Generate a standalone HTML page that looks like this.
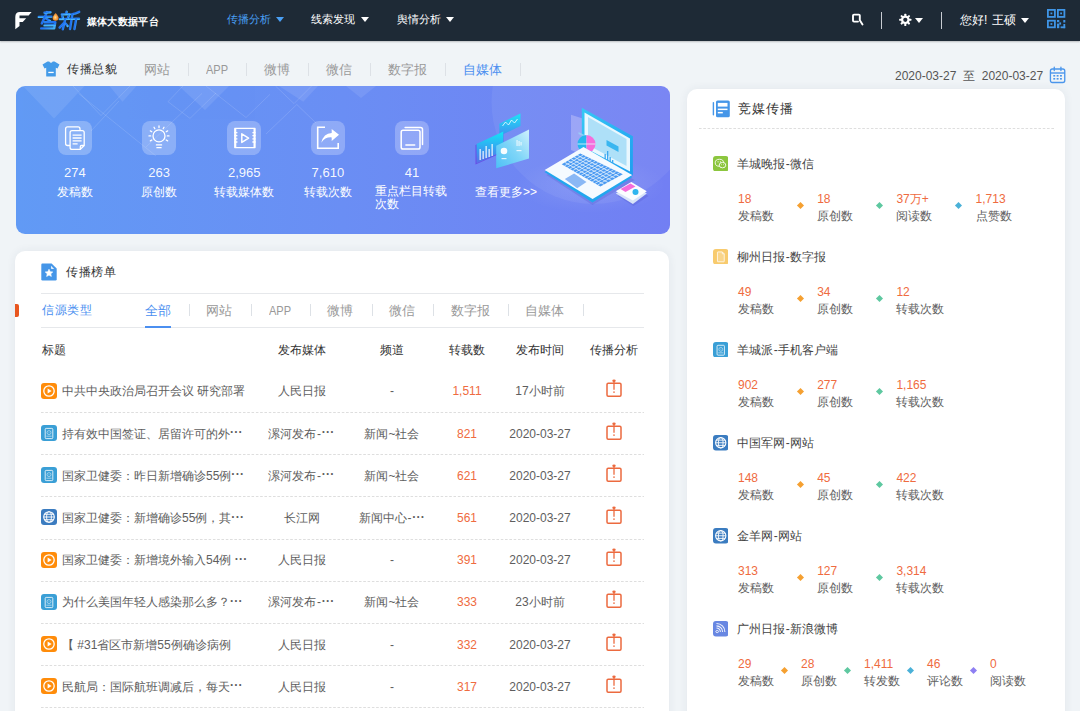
<!DOCTYPE html>
<html><head><meta charset="utf-8">
<style>
*{margin:0;padding:0;box-sizing:border-box}
html,body{width:1080px;height:711px;overflow:hidden;background:#f0f4f7;font-family:"Liberation Sans",sans-serif;}
.a{position:absolute;white-space:nowrap}
#hdr{position:absolute;left:0;top:0;width:1080px;height:41px;background:#1e2a36;box-shadow:0 1px 1.5px rgba(0,0,0,0.22)}
.nav{font-size:11.3px;color:#fff;line-height:14px}
.tri{position:absolute;width:0;height:0;border-left:4px solid transparent;border-right:4px solid transparent;border-top:5px solid #fff}
.tab1{font-size:13px;color:#999;line-height:15px}
.vd{position:absolute;width:1px;background:#dde1e6}
.card{position:absolute;background:#fff;border-radius:10px;box-shadow:0 0 10px rgba(40,60,90,0.07)}
.td{font-size:12px;color:#5e5e5e;line-height:14px}
.th{font-size:12px;color:#333;line-height:14px}
.c{text-align:center}
.hy{margin:0 0.7px}
.el{letter-spacing:0.3px;position:relative;top:-1.5px;font-weight:bold}
.num{color:#ef6b40}
.dash{position:absolute;height:1px;background-image:linear-gradient(90deg,#dedede 0 2.9px,transparent 2.9px 4.3px);background-size:4.3px 1px}
.rn{font-size:12px;color:#444;line-height:14px}
.rv{font-size:12px;color:#ef6b40;line-height:14px}
.rl{font-size:12px;color:#5e5e5e;line-height:14px}
.dia{position:absolute;width:5px;height:5px;transform:rotate(45deg)}
.bi{position:absolute;width:34px;height:34px;border-radius:8px;background:rgba(255,255,255,0.25)}
.bn{font-size:13px;color:rgba(255,255,255,0.95);text-align:center;line-height:15px}
.bl{font-size:12px;color:#fff;text-align:center;line-height:14px}
</style></head><body>
<div id="hdr">
  <svg class="a" style="left:0;top:0" width="84" height="40" viewBox="0 0 84 40">
<path d="M15.3 29.2 L15.3 17 Q15.3 12 19.8 12 L31.6 12 L28.6 15.6 L19.5 15.6 L19.5 18.2 L26.2 18.2 L22.7 21.9 L19.5 21.9 L19.5 26 Z" fill="#fff"/>
<defs><linearGradient id="lg" x1="0" y1="0" x2="1" y2="1"><stop offset="0" stop-color="#2a86f5"/><stop offset="0.5" stop-color="#1f6ff0"/><stop offset="1" stop-color="#48b8f8"/></linearGradient>
<radialGradient id="og" cx="0.45" cy="0.55" r="0.6"><stop offset="0" stop-color="#ffe3a0"/><stop offset="0.5" stop-color="#f6a040"/><stop offset="1" stop-color="#e07020"/></radialGradient></defs>
<g fill="none" stroke="url(#lg)" stroke-width="2.4" stroke-linecap="round" stroke-linejoin="round">
<path d="M38.8 16.9 L51.5 16.6"/><path d="M47 12 L41.8 23.5"/><path d="M44.5 12.6 L50.5 12.2"/><path d="M46 18.5 L50 21"/>
<path d="M44.6 22.3 L55.3 22.2 L54.2 28.3 L41.2 28.4"/><path d="M44.5 25.4 L54.5 25.3"/>
<path d="M66.6 11.6 L66.4 12.8"/><path d="M61.8 14.4 L69.8 14.2"/><path d="M59.8 19.1 L69.8 18.9"/><path d="M65.2 19.2 L62.8 29.3"/><path d="M62.3 16.2 L62.8 17.8"/><path d="M68.8 15.8 L68 17.6"/><path d="M63.6 23.2 L59.6 27.6"/><path d="M65.6 23.4 L67.6 26"/>
<path d="M79.2 11.8 Q75.5 13.6 72.4 14.1"/><path d="M72.4 14.1 L70 29"/><path d="M71.6 18.9 L79 18.7"/><path d="M76.2 19 L74.4 29"/>
</g>
<path d="M55.6 13 Q58.6 16.5 58.6 17.8 A3 3 0 0 1 52.6 17.8 Q52.6 16.5 55.6 13 Z" fill="url(#og)"/>
</svg>
  <div class="a" style="left:86.5px;top:15px;font-size:10px;letter-spacing:0.35px;font-weight:bold;color:#fff;line-height:13px">媒体大数据平台</div>
  <div class="a nav" style="left:227px;top:12px;color:#4aa0f5">传播分析</div>
  <div class="tri" style="left:276px;top:17px;border-top-color:#4aa0f5"></div>
  <div class="a nav" style="left:311px;top:12px">线索发现</div>
  <div class="tri" style="left:361px;top:17px"></div>
  <div class="a nav" style="left:397px;top:12px">舆情分析</div>
  <div class="tri" style="left:446px;top:17px"></div>
  <svg class="a" style="left:850px;top:12px" width="16" height="16" viewBox="0 0 16 16">
    <path d="M8 9.6 L4 9.6 Q3 9.6 3 8.6 L3 3.6 Q3 2.6 4 2.6 L8.8 2.6 Q9.8 2.6 9.8 3.6 L9.8 8.2 L12.5 12.5" fill="none" stroke="#fff" stroke-width="1.9" stroke-linecap="round" stroke-linejoin="round"/>
  </svg>
  <div class="vd" style="left:881px;top:12px;height:17px;background:#c8ccd2"></div>
  <svg class="a" style="left:898px;top:13px" width="15" height="14" viewBox="0 0 15 14">
    <g fill="#fff" transform="translate(7.3,6.8)">
      <circle r="4.3"/>
      <rect x="-1" y="-6.1" width="2" height="12.2" rx="0.5"/>
      <rect x="-1" y="-6.1" width="2" height="12.2" rx="0.5" transform="rotate(45)"/>
      <rect x="-1" y="-6.1" width="2" height="12.2" rx="0.5" transform="rotate(90)"/>
      <rect x="-1" y="-6.1" width="2" height="12.2" rx="0.5" transform="rotate(135)"/>
      <circle r="2.1" fill="#1f2a36"/>
    </g>
  </svg>
  <div class="tri" style="left:915px;top:18px"></div>
  <div class="vd" style="left:941px;top:12px;height:17px;background:#c8ccd2"></div>
  <div class="a nav" style="left:960px;top:13px;font-size:12px">您好!<span style="margin-left:5px"></span>王硕</div>
  <div class="tri" style="left:1021px;top:18px"></div>
  <svg class="a" style="left:1047px;top:9px" width="20" height="20" viewBox="0 0 20 20">
    <g fill="none" stroke="#3f95e6" stroke-width="1.8">
      <rect x="0.9" y="0.9" width="7" height="7"/>
      <rect x="10.9" y="0.9" width="6.5" height="7"/>
      <rect x="0.9" y="11.7" width="7" height="6.6"/>
    </g>
    <g fill="#3f95e6">
      <rect x="3.5" y="3.5" width="1.8" height="1.8"/><rect x="13.2" y="3.5" width="1.8" height="1.8"/><rect x="3.5" y="14.1" width="1.8" height="1.8"/>
      <rect x="10" y="11" width="2.3" height="2.2"/><rect x="10" y="14.6" width="2.3" height="4.6"/><rect x="16.3" y="11" width="2" height="2.5"/><rect x="12.3" y="13.4" width="1.8" height="2.2"/><rect x="16.4" y="15" width="1.8" height="4.2"/><rect x="13.6" y="17.4" width="4.6" height="1.8"/>
    </g>
  </svg>
</div>
<!-- tab row -->
<svg class="a" style="left:42px;top:61px" width="18" height="16" viewBox="0 0 18 16">
  <path d="M5.5 0.5 L7.2 0.5 Q9 3 10.8 0.5 L12.5 0.5 L17.5 3.5 L15.5 7.5 L13.8 6.8 L13.8 15 Q13.8 15.5 13.3 15.5 L4.7 15.5 Q4.2 15.5 4.2 15 L4.2 6.8 L2.5 7.5 L0.5 3.5 Z" fill="#449be8"/>
  <rect x="6.3" y="10.8" width="5.4" height="1.3" fill="#fff"/>
</svg>
<div class="a" style="left:67px;top:62px;font-size:12px;letter-spacing:0.5px;color:#333;line-height:15px">传播总貌</div>
<div class="a tab1" style="left:144px;top:62px">网站</div>
<div class="vd" style="left:187.5px;top:63px;height:13px"></div>
<div class="a tab1" style="left:205.5px;top:62px"><span style="display:inline-block;font-size:13px;transform:scaleX(0.85);transform-origin:0 0">APP</span></div>
<div class="vd" style="left:246px;top:63px;height:13px"></div>
<div class="a tab1" style="left:264px;top:62px">微博</div>
<div class="vd" style="left:308px;top:63px;height:13px"></div>
<div class="a tab1" style="left:325.5px;top:62px">微信</div>
<div class="vd" style="left:370px;top:63px;height:13px"></div>
<div class="a tab1" style="left:387.5px;top:62px">数字报</div>
<div class="vd" style="left:445px;top:63px;height:13px"></div>
<div class="a tab1" style="left:462.5px;top:62px;color:#4b8ff0">自媒体</div>
<div class="vd" style="left:520px;top:63px;height:13px"></div>
<div class="a" style="left:895px;top:69px;font-size:12px;color:#555;line-height:14px">2020-03-27 &nbsp;至&nbsp; 2020-03-27</div>
<svg class="a" style="left:1049px;top:66px" width="17.2" height="18" viewBox="0 0 18 18" preserveAspectRatio="none">
  <rect x="1.5" y="3" width="15" height="13.5" rx="2" fill="none" stroke="#4b96ec" stroke-width="1.4"/>
  <path d="M1.5 7 H16.5" stroke="#4b96ec" stroke-width="1.4"/>
  <path d="M5.5 1.2 V4.5 M12.5 1.2 V4.5" stroke="#4b96ec" stroke-width="1.4" stroke-linecap="round"/>
  <g fill="#4b96ec"><rect x="4.5" y="9" width="2" height="1.6"/><rect x="8" y="9" width="2" height="1.6"/><rect x="11.5" y="9" width="2" height="1.6"/><rect x="4.5" y="12" width="2" height="1.6"/><rect x="8" y="12" width="2" height="1.6"/><rect x="11.5" y="12" width="2" height="1.6"/></g>
</svg>

<!-- banner -->
<div class="a" id="banner" style="left:15.5px;top:86px;width:654px;height:148px;border-radius:9px;overflow:hidden;background:linear-gradient(90deg,#619af5 0%,#6a8ef4 50%,#727ff3 100%)">
  <svg class="a" style="left:0;top:0" width="654" height="148" viewBox="0 0 654 148">
    <g fill="#fff" opacity="0.09">
      <path d="M7 0 L68.5 0 L38 32.4 Z"/>
      <path d="M93.5 0 L120.4 0 L106.5 15.7 Z"/>
      <path d="M163 0 L213 0 L189 24 Z"/>
      <path d="M263 0 L302 0 L287.3 15.7 Z"/>
      <path d="M330 0 L360 0 L345 12 Z"/>
    </g>
    <g fill="none" stroke="#fff" stroke-opacity="0.13" stroke-width="1">
      <path d="M57 0 L85 29.6 L114 0"/>
      <path d="M62.5 7.4 L140 70"/>
      <path d="M103 15 L75 45"/>
      <path d="M152 15.7 L167 0 M152 15.7 L174 32.4 L200 7"/>
      <path d="M186 7.4 L130 61"/>
      <path d="M254 8.3 L230 31.5 L190 0"/>
      <path d="M280.8 18.5 L250 48 M280.8 18.5 L300 37"/>
      <path d="M259.5 0 L278 17.6 L295.6 0"/>
    </g>
    <circle cx="577.5" cy="16" r="102" fill="#fff" opacity="0.06"/>
  </svg>
  <div class="bi" style="left:42.3px;top:34.5px"><svg width="34" height="34" viewBox="0 0 34 34"><g fill="none" stroke="#fff" stroke-width="1.3" stroke-linejoin="round"><path d="M12.1 24.5 H9.6 Q7.6 24.5 7.6 22.5 V7.9 Q7.6 5.9 9.6 5.9 H20 Q22 5.9 22 7.9 V9.6"/><path d="M14.1 9.6 H24.2 Q26.2 9.6 26.2 11.6 V24.5 L22.3 28.4 H14.1 Q12.1 28.4 12.1 26.4 V11.6 Q12.1 9.6 14.1 9.6 Z"/><path d="M26.2 24.5 H23.5 Q22.3 24.5 22.3 25.7 V28.4"/><path d="M14.6 14.1 H23.6 M14.6 17 H23.6 M14.6 19.8 H23.6 M14.6 22.8 H19.6"/></g></svg></div>
<div class="a bn" style="left:9.3px;width:100px;top:78.5px">274</div>
<div class="a bl" style="left:9.3px;width:100px;top:99.3px">发稿数</div>
<div class="bi" style="left:126.6px;top:34.5px"><svg width="34" height="34" viewBox="0 0 34 34"><g fill="none" stroke="#fff" stroke-width="1.3" stroke-linecap="round"><circle cx="17" cy="14.9" r="6"/><g transform="translate(17 14.9)"><path d="M0 -8.3 V-10" transform="rotate(0)"/><path d="M0 -8.3 V-10" transform="rotate(-30)"/><path d="M0 -8.3 V-10" transform="rotate(30)"/><path d="M0 -8.3 V-10" transform="rotate(-60)"/><path d="M0 -8.3 V-10" transform="rotate(60)"/><path d="M0 -8.3 V-10" transform="rotate(-90)"/><path d="M0 -8.3 V-10" transform="rotate(90)"/><path d="M0 -8.3 V-10" transform="rotate(-120)"/><path d="M0 -8.3 V-10" transform="rotate(120)"/></g><path d="M14.4 23.9 H19.6 M14.9 26.7 H19.1"/></g></svg></div>
<div class="a bn" style="left:93.6px;width:100px;top:78.5px">263</div>
<div class="a bl" style="left:93.6px;width:100px;top:99.3px">原创数</div>
<div class="bi" style="left:211.7px;top:34.5px"><svg width="34" height="34" viewBox="0 0 34 34"><g fill="none" stroke="#fff" stroke-width="1.3" stroke-linejoin="round"><rect x="7.8" y="7.4" width="20.2" height="19.2"/><path d="M8.5 7.4 V26.6 M27.3 7.4 V26.6" stroke-width="1.6"/><path d="M7.2 11.6 H10.4 M7.2 14.7 H10.4 M7.2 17.8 H10.4 M7.2 21 H10.4 M25.4 11.6 H28.6 M25.4 14.7 H28.6 M25.4 17.8 H28.6 M25.4 21 H28.6"/><path d="M14.8 12.8 L21.6 17.1 L14.8 21.4 Z" stroke-width="1.5"/></g></svg></div>
<div class="a bn" style="left:178.7px;width:100px;top:78.5px">2,965</div>
<div class="a bl" style="left:178.7px;width:100px;top:99.3px">转载媒体数</div>
<div class="bi" style="left:295.4px;top:34.5px"><svg width="34" height="34" viewBox="0 0 34 34"><g fill="none" stroke="#fff" stroke-width="1.6" stroke-linecap="square"><path d="M13.2 6.2 H6.7 V27.3 H27.2 V22.8"/></g><path d="M10.3 21.7 Q12.5 12.3 20.7 12 V7.9 L28 13.8 L20.7 20 V16.4 Q14 16 10.3 21.7 Z" fill="#fff"/></svg></div>
<div class="a bn" style="left:262.4px;width:100px;top:78.5px">7,610</div>
<div class="a bl" style="left:262.4px;width:100px;top:99.3px">转载次数</div>
<div class="bi" style="left:379.6px;top:34.5px"><svg width="34" height="34" viewBox="0 0 34 34"><g fill="none" stroke="#fff" stroke-width="1.5" stroke-linecap="round"><rect x="6.2" y="9.3" width="18.8" height="18.8" rx="1.8"/><path d="M10.1 6.5 H25.5 Q27.5 6.5 27.5 8.5 V23.6"/><path d="M10.9 24 H19.7"/></g></svg></div>
<div class="a bn" style="left:346.6px;width:100px;top:78.5px">41</div>
<div class="a bl" style="left:359.3px;top:99.3px;white-space:normal;width:80px;text-align:left;line-height:13px">重点栏目转载<br>次数</div>
<div class="a bl" style="left:459.5px;top:99.3px;text-align:left">查看更多&gt;&gt;</div>
<svg class="a" style="left:0;top:0" width="654" height="148" viewBox="15.5 86 654 148">
<defs>
<linearGradient id="gA" x1="0" y1="0" x2="0" y2="1"><stop offset="0" stop-color="#1de4f6"/><stop offset="1" stop-color="#3f8ef0"/></linearGradient>
<linearGradient id="gB" x1="0" y1="0" x2="0" y2="1"><stop offset="0" stop-color="#12e6f7"/><stop offset="0.6" stop-color="#3a9bf0"/><stop offset="1" stop-color="#5a6ce8"/></linearGradient>
<linearGradient id="gC" x1="1" y1="0" x2="0" y2="1"><stop offset="0" stop-color="#d4f6fd"/><stop offset="0.5" stop-color="#7fd9f8"/><stop offset="1" stop-color="#4cc3f6"/></linearGradient>
<linearGradient id="gS" x1="0" y1="0" x2="1" y2="1"><stop offset="0" stop-color="#36c8f5"/><stop offset="1" stop-color="#1e9ff0"/></linearGradient>
<radialGradient id="gSh" cx="0.5" cy="0.5" r="0.5"><stop offset="0" stop-color="#fff" stop-opacity="0.12"/><stop offset="1" stop-color="#fff" stop-opacity="0"/></radialGradient>
</defs>
<ellipse cx="590" cy="185" rx="75" ry="28" fill="url(#gSh)"/>
<!-- small illus -->
<path d="M498.8 123.8 L520 113.4 L520 126 L498.8 136 Z" fill="url(#gA)"/>
<path d="M502 126 L505 122 L508 125 L511 120 L514 123 L517 119" fill="none" stroke="#fff" stroke-width="0.9" opacity="0.85"/>
<path d="M475 145 L502.9 132.3 L502.9 152 L475 164.5 Z" fill="#6a4ae6"/>
<path d="M476 144 L502.9 131.5 L502.9 151 L476 163.5 Z" fill="url(#gB)"/>
<g fill="#fff" opacity="0.85"><rect x="479" y="149" width="1.3" height="11"/><rect x="482" y="151" width="1.3" height="8"/><rect x="485" y="146" width="1.3" height="12"/><rect x="488" y="149" width="1.3" height="8"/><rect x="491" y="144" width="1.3" height="12"/></g>
<path d="M495.7 145.8 L528.5 129.6 L528.5 158.4 L495.7 168.3 Z" fill="url(#gC)" opacity="0.95"/>
<circle cx="503.5" cy="151" r="3.3" fill="#fff" opacity="0.95"/>
<g fill="#fff" opacity="0.8"><rect x="516" y="140" width="1.1" height="6"/><rect x="518" y="141" width="1.1" height="5"/><rect x="520" y="142" width="1.1" height="3.5"/><rect x="501" y="158" width="5" height="1.2"/><rect x="516" y="150" width="5" height="1.2"/></g>
<!-- laptop -->
<path d="M570.5 114.7 L590 121 L590 158 L570.5 150 Z" fill="#c8c8fa" opacity="0.45"/>
<path d="M581.3 107.7 L632.4 136.3 L632.4 175.8 L581.3 150 Z" fill="url(#gS)"/>
<path d="M584 112.5 L629.5 138.5 L629.5 171.5 L584 147.5 Z" fill="#e9f7fe"/>
<path d="M587.5 117 L626 139 L626 166 L587.5 145 Z" fill="#aee0f8"/>
<path d="M606 140 L618 146.5 L618 152 L606 145.5 Z" fill="#39b6f0"/>
<g fill="#3aa7f0"><rect x="604" y="154" width="1.3" height="14"/><rect x="606.5" y="151" width="1.3" height="17"/><rect x="609" y="157" width="1.3" height="11"/><rect x="611.5" y="160" width="1.3" height="9"/></g>
<path d="M578 132 L594 140 L594 142 L578 134 Z" fill="#9bd3f6" opacity="0.8"/>
<path d="M586 135 A9 9 0 0 0 586 153 Z" fill="#25b7ef"/>
<path d="M586 135 A9 9 0 0 1 586 153 Z" fill="#f56ddc"/>
<path d="M577 144 L595 144" stroke="#e9f7fe" stroke-width="0.8"/>
<path d="M546 175 L585 152 L634 180 L592 205 Z" fill="#4a50c8" opacity="0.25"/><path d="M544 172 L583 149 L632 177 L592 202.5 Z" fill="#22a6ee"/>
<path d="M544.2 170 L583 147 L631.6 175 L592.1 199 Z" fill="#f5faff"/>
<path d="M561.2 164.2 L579.8 153.4 L622.3 174.2 L599.9 186.6 Z" fill="#4a9af2"/>
<g stroke="#f5faff" stroke-width="0.8" opacity="0.95"><path d="M564.3 162.4 L603.6 184.5 M567.4 160.6 L607.4 182.5 M570.5 158.8 L611.1 180.4 M573.6 157.0 L614.8 178.3 M576.7 155.2 L618.6 176.3"/><path d="M564.0 165.8 L582.8 154.9 M566.7 167.4 L585.9 156.4 M569.5 169.0 L588.9 157.9 M572.3 170.6 L591.9 159.3 M575.0 172.2 L595.0 160.8 M577.8 173.8 L598.0 162.3 M580.5 175.4 L601.0 163.8 M583.3 177.0 L604.1 165.3 M586.1 178.6 L607.1 166.8 M588.8 180.2 L610.2 168.3 M591.6 181.8 L613.2 169.7 M594.4 183.4 L616.2 171.2 M597.1 185.0 L619.3 172.7" stroke-width="0.7"/></g>
<path d="M564.3 178.9 L573.6 173.5 L586 182 L576.7 188.2 Z" fill="#8ab8f5"/>
<!-- device -->
<path d="M617 196 L632 187 L648 196 L633 206 Z" fill="#4a50c8" opacity="0.25"/><path d="M615.3 193.5 L630.8 184 L646.3 193.5 L632.4 204 Z" fill="#d8e4f8"/>
<path d="M615.3 191.3 L630.8 182 L646.3 191.3 L632.4 200.5 Z" fill="#fbfdff"/>
<path d="M620 189 L630 183.5 L635 186.5 L625 192 Z" fill="#f56ddc"/>
<circle cx="635" cy="192" r="3" fill="#2fb5ef"/>
</svg>
</div>

<!-- left card -->
<div class="card" style="left:15.3px;top:251px;width:654.2px;height:480px"></div>
<svg class="a" style="left:41px;top:263px" width="16" height="18" viewBox="0 0 16 18">
  <path d="M1.3 0.5 H10.6 L15.7 5.6 V16.2 Q15.7 17.4 14.5 17.4 H1.5 Q0.3 17.4 0.3 16.2 V1.7 Q0.3 0.5 1.3 0.5 Z" fill="#4596e8"/>
  <path d="M10 2.8 L13.2 6 H10.8 Q10 6 10 5.2 Z" fill="#fff" fill-opacity="0.85"/>
  <path d="M8.00 6.20 L9.12 8.66 L11.80 8.96 L9.81 10.79 L10.35 13.44 L8.00 12.10 L5.65 13.44 L6.19 10.79 L4.20 8.96 L6.88 8.66 Z" fill="#fff" stroke="#fff" stroke-width="0.6" stroke-linejoin="round"/>
</svg>
<div class="a" style="left:66px;top:264.5px;font-size:12px;letter-spacing:0.5px;color:#333;line-height:15px">传播榜单</div>
<div class="a" style="left:41px;top:293px;width:603px;height:1px;background:#e6e8eb"></div>
<div class="a" style="left:15.3px;top:303.5px;width:3.5px;height:13px;background:#e8561f;border-radius:0 2px 2px 0"></div>
<div class="a" style="left:42px;top:302.5px;font-size:12px;letter-spacing:0.5px;color:#4b8ff0;line-height:15px">信源类型</div>
<div class="a tab1" style="left:144.5px;top:302.5px;color:#4b8ff0">全部</div>
<div class="vd" style="left:188.5px;top:304px;height:12px"></div>
<div class="a tab1" style="left:205.5px;top:302.5px">网站</div>
<div class="vd" style="left:250.5px;top:304px;height:12px"></div>
<div class="a tab1" style="left:268.5px;top:302.5px"><span style="display:inline-block;font-size:13px;transform:scaleX(0.85);transform-origin:0 0">APP</span></div>
<div class="vd" style="left:309.5px;top:304px;height:12px"></div>
<div class="a tab1" style="left:327px;top:302.5px">微博</div>
<div class="vd" style="left:371.5px;top:304px;height:12px"></div>
<div class="a tab1" style="left:389px;top:302.5px">微信</div>
<div class="vd" style="left:433px;top:304px;height:12px"></div>
<div class="a tab1" style="left:451px;top:302.5px">数字报</div>
<div class="vd" style="left:508px;top:304px;height:12px"></div>
<div class="a tab1" style="left:525px;top:302.5px">自媒体</div>
<div class="vd" style="left:583px;top:304px;height:12px"></div>
<div class="a" style="left:41px;top:327px;width:603px;height:1px;background:#e6e8eb"></div>
<div class="a" style="left:144.5px;top:326px;width:26px;height:2px;background:#4b8ff0"></div>
<div class="a th" style="left:41.5px;top:342.5px">标题</div>
<div class="a th c" style="left:251px;width:101px;top:342.5px">发布媒体</div>
<div class="a th c" style="left:342px;width:100px;top:342.5px">频道</div>
<div class="a th c" style="left:427px;width:80px;top:342.5px">转载数</div>
<div class="a th c" style="left:490px;width:100px;top:342.5px">发布时间</div>
<div class="a th c" style="left:564px;width:100px;top:342.5px">传播分析</div>
<div class="a" style="left:41px;top:382.8px;width:16px;height:16px"><svg width="16" height="16" viewBox="0 0 16 16"><rect width="16" height="16" rx="3" fill="#ff8c0a"/><circle cx="8" cy="8" r="5.2" fill="none" stroke="#fff" stroke-width="1.3"/><path d="M6.6 5.6 L10.6 8 L6.6 10.4 Z" fill="#fff"/></svg></div>
<div class="a td" style="left:62px;top:384.4px">中共中央政治局召开会议 研究部署</div>
<div class="a td c" style="left:251px;width:101px;top:384.4px">人民日报</div>
<div class="a td c" style="left:342px;width:100px;top:384.4px">-</div>
<div class="a td c num" style="left:427px;width:80px;top:384.4px">1,511</div>
<div class="a td c" style="left:490px;width:100px;top:384.4px">17小时前</div>
<div class="a" style="left:605px;top:378.4px;width:18px;height:20px"><svg width="18" height="20" viewBox="0 0 18 20"><rect x="2" y="5.2" width="14" height="13" rx="1.2" fill="none" stroke="#ec6a3f" stroke-width="1.5"/><ellipse cx="9" cy="2.7" rx="1.7" ry="1.3" fill="#ec6a3f"/><path d="M9 3 V11.8" stroke="#ec6a3f" stroke-width="1.3"/><rect x="8.3" y="13.4" width="1.4" height="1.5" fill="#ec6a3f"/></svg></div>
<div class="dash" style="left:41px;top:412.0px;width:603px"></div>
<div class="a" style="left:41px;top:425.0px;width:16px;height:16px"><svg width="16" height="16" viewBox="0 0 16 16"><rect width="16" height="16" rx="3" fill="#3a9fd6"/><rect x="4.2" y="3.4" width="7.6" height="10.2" rx="1" fill="none" stroke="#fff" stroke-width="1" stroke-opacity="0.8"/><circle cx="8" cy="7.6" r="2" fill="none" stroke="#fff" stroke-width="0.8" stroke-opacity="0.6"/><circle cx="8" cy="7.6" r="0.9" fill="#fff" fill-opacity="0.2"/><path d="M5.4 11.2 H10.6" stroke="#fff" stroke-width="0.9" stroke-opacity="0.6"/></svg></div>
<div class="a td" style="left:62px;top:426.6px">持有效中国签证、居留许可的外<span class="el">···</span></div>
<div class="a td c" style="left:251px;width:101px;top:426.6px">漯河发布<span class="hy">-</span><span class="el">···</span></div>
<div class="a td c" style="left:342px;width:100px;top:426.6px">新闻~社会</div>
<div class="a td c num" style="left:427px;width:80px;top:426.6px">821</div>
<div class="a td c" style="left:490px;width:100px;top:426.6px">2020-03-27</div>
<div class="a" style="left:605px;top:420.6px;width:18px;height:20px"><svg width="18" height="20" viewBox="0 0 18 20"><rect x="2" y="5.2" width="14" height="13" rx="1.2" fill="none" stroke="#ec6a3f" stroke-width="1.5"/><ellipse cx="9" cy="2.7" rx="1.7" ry="1.3" fill="#ec6a3f"/><path d="M9 3 V11.8" stroke="#ec6a3f" stroke-width="1.3"/><rect x="8.3" y="13.4" width="1.4" height="1.5" fill="#ec6a3f"/></svg></div>
<div class="dash" style="left:41px;top:454.2px;width:603px"></div>
<div class="a" style="left:41px;top:467.2px;width:16px;height:16px"><svg width="16" height="16" viewBox="0 0 16 16"><rect width="16" height="16" rx="3" fill="#3a9fd6"/><rect x="4.2" y="3.4" width="7.6" height="10.2" rx="1" fill="none" stroke="#fff" stroke-width="1" stroke-opacity="0.8"/><circle cx="8" cy="7.6" r="2" fill="none" stroke="#fff" stroke-width="0.8" stroke-opacity="0.6"/><circle cx="8" cy="7.6" r="0.9" fill="#fff" fill-opacity="0.2"/><path d="M5.4 11.2 H10.6" stroke="#fff" stroke-width="0.9" stroke-opacity="0.6"/></svg></div>
<div class="a td" style="left:62px;top:468.8px">国家卫健委：昨日新增确诊55例<span class="el">···</span></div>
<div class="a td c" style="left:251px;width:101px;top:468.8px">漯河发布<span class="hy">-</span><span class="el">···</span></div>
<div class="a td c" style="left:342px;width:100px;top:468.8px">新闻~社会</div>
<div class="a td c num" style="left:427px;width:80px;top:468.8px">621</div>
<div class="a td c" style="left:490px;width:100px;top:468.8px">2020-03-27</div>
<div class="a" style="left:605px;top:462.8px;width:18px;height:20px"><svg width="18" height="20" viewBox="0 0 18 20"><rect x="2" y="5.2" width="14" height="13" rx="1.2" fill="none" stroke="#ec6a3f" stroke-width="1.5"/><ellipse cx="9" cy="2.7" rx="1.7" ry="1.3" fill="#ec6a3f"/><path d="M9 3 V11.8" stroke="#ec6a3f" stroke-width="1.3"/><rect x="8.3" y="13.4" width="1.4" height="1.5" fill="#ec6a3f"/></svg></div>
<div class="dash" style="left:41px;top:496.4px;width:603px"></div>
<div class="a" style="left:41px;top:509.4px;width:16px;height:16px"><svg width="16" height="16" viewBox="0 0 16 16"><rect width="16" height="16" rx="3" fill="#3b7cc0"/><circle cx="8" cy="8" r="5.3" fill="none" stroke="#fff" stroke-width="1.1"/><ellipse cx="8" cy="8" rx="2.4" ry="5.3" fill="none" stroke="#fff" stroke-width="0.9"/><path d="M2.7 8 H13.3 M3.5 5.3 H12.5 M3.5 10.7 H12.5" stroke="#fff" stroke-width="0.9"/></svg></div>
<div class="a td" style="left:62px;top:511.0px">国家卫健委：新增确诊55例，其<span class="el">···</span></div>
<div class="a td c" style="left:251px;width:101px;top:511.0px">长江网</div>
<div class="a td c" style="left:342px;width:100px;top:511.0px">新闻中心<span class="hy">-</span><span class="el">···</span></div>
<div class="a td c num" style="left:427px;width:80px;top:511.0px">561</div>
<div class="a td c" style="left:490px;width:100px;top:511.0px">2020-03-27</div>
<div class="a" style="left:605px;top:505.0px;width:18px;height:20px"><svg width="18" height="20" viewBox="0 0 18 20"><rect x="2" y="5.2" width="14" height="13" rx="1.2" fill="none" stroke="#ec6a3f" stroke-width="1.5"/><ellipse cx="9" cy="2.7" rx="1.7" ry="1.3" fill="#ec6a3f"/><path d="M9 3 V11.8" stroke="#ec6a3f" stroke-width="1.3"/><rect x="8.3" y="13.4" width="1.4" height="1.5" fill="#ec6a3f"/></svg></div>
<div class="dash" style="left:41px;top:538.6px;width:603px"></div>
<div class="a" style="left:41px;top:551.6px;width:16px;height:16px"><svg width="16" height="16" viewBox="0 0 16 16"><rect width="16" height="16" rx="3" fill="#ff8c0a"/><circle cx="8" cy="8" r="5.2" fill="none" stroke="#fff" stroke-width="1.3"/><path d="M6.6 5.6 L10.6 8 L6.6 10.4 Z" fill="#fff"/></svg></div>
<div class="a td" style="left:62px;top:553.2px">国家卫健委：新增境外输入54例 <span class="el">···</span></div>
<div class="a td c" style="left:251px;width:101px;top:553.2px">人民日报</div>
<div class="a td c" style="left:342px;width:100px;top:553.2px">-</div>
<div class="a td c num" style="left:427px;width:80px;top:553.2px">391</div>
<div class="a td c" style="left:490px;width:100px;top:553.2px">2020-03-27</div>
<div class="a" style="left:605px;top:547.2px;width:18px;height:20px"><svg width="18" height="20" viewBox="0 0 18 20"><rect x="2" y="5.2" width="14" height="13" rx="1.2" fill="none" stroke="#ec6a3f" stroke-width="1.5"/><ellipse cx="9" cy="2.7" rx="1.7" ry="1.3" fill="#ec6a3f"/><path d="M9 3 V11.8" stroke="#ec6a3f" stroke-width="1.3"/><rect x="8.3" y="13.4" width="1.4" height="1.5" fill="#ec6a3f"/></svg></div>
<div class="dash" style="left:41px;top:580.8px;width:603px"></div>
<div class="a" style="left:41px;top:593.8px;width:16px;height:16px"><svg width="16" height="16" viewBox="0 0 16 16"><rect width="16" height="16" rx="3" fill="#3a9fd6"/><rect x="4.2" y="3.4" width="7.6" height="10.2" rx="1" fill="none" stroke="#fff" stroke-width="1" stroke-opacity="0.8"/><circle cx="8" cy="7.6" r="2" fill="none" stroke="#fff" stroke-width="0.8" stroke-opacity="0.6"/><circle cx="8" cy="7.6" r="0.9" fill="#fff" fill-opacity="0.2"/><path d="M5.4 11.2 H10.6" stroke="#fff" stroke-width="0.9" stroke-opacity="0.6"/></svg></div>
<div class="a td" style="left:62px;top:595.4px">为什么美国年轻人感染那么多？<span class="el">···</span></div>
<div class="a td c" style="left:251px;width:101px;top:595.4px">漯河发布<span class="hy">-</span><span class="el">···</span></div>
<div class="a td c" style="left:342px;width:100px;top:595.4px">新闻~社会</div>
<div class="a td c num" style="left:427px;width:80px;top:595.4px">333</div>
<div class="a td c" style="left:490px;width:100px;top:595.4px">23小时前</div>
<div class="a" style="left:605px;top:589.4px;width:18px;height:20px"><svg width="18" height="20" viewBox="0 0 18 20"><rect x="2" y="5.2" width="14" height="13" rx="1.2" fill="none" stroke="#ec6a3f" stroke-width="1.5"/><ellipse cx="9" cy="2.7" rx="1.7" ry="1.3" fill="#ec6a3f"/><path d="M9 3 V11.8" stroke="#ec6a3f" stroke-width="1.3"/><rect x="8.3" y="13.4" width="1.4" height="1.5" fill="#ec6a3f"/></svg></div>
<div class="dash" style="left:41px;top:623.0px;width:603px"></div>
<div class="a" style="left:41px;top:636.0px;width:16px;height:16px"><svg width="16" height="16" viewBox="0 0 16 16"><rect width="16" height="16" rx="3" fill="#ff8c0a"/><circle cx="8" cy="8" r="5.2" fill="none" stroke="#fff" stroke-width="1.3"/><path d="M6.6 5.6 L10.6 8 L6.6 10.4 Z" fill="#fff"/></svg></div>
<div class="a td" style="left:62px;top:637.6px">【 #31省区市新增55例确诊病例</div>
<div class="a td c" style="left:251px;width:101px;top:637.6px">人民日报</div>
<div class="a td c" style="left:342px;width:100px;top:637.6px">-</div>
<div class="a td c num" style="left:427px;width:80px;top:637.6px">332</div>
<div class="a td c" style="left:490px;width:100px;top:637.6px">2020-03-27</div>
<div class="a" style="left:605px;top:631.6px;width:18px;height:20px"><svg width="18" height="20" viewBox="0 0 18 20"><rect x="2" y="5.2" width="14" height="13" rx="1.2" fill="none" stroke="#ec6a3f" stroke-width="1.5"/><ellipse cx="9" cy="2.7" rx="1.7" ry="1.3" fill="#ec6a3f"/><path d="M9 3 V11.8" stroke="#ec6a3f" stroke-width="1.3"/><rect x="8.3" y="13.4" width="1.4" height="1.5" fill="#ec6a3f"/></svg></div>
<div class="dash" style="left:41px;top:665.2px;width:603px"></div>
<div class="a" style="left:41px;top:678.2px;width:16px;height:16px"><svg width="16" height="16" viewBox="0 0 16 16"><rect width="16" height="16" rx="3" fill="#ff8c0a"/><circle cx="8" cy="8" r="5.2" fill="none" stroke="#fff" stroke-width="1.3"/><path d="M6.6 5.6 L10.6 8 L6.6 10.4 Z" fill="#fff"/></svg></div>
<div class="a td" style="left:62px;top:679.8px">民航局：国际航班调减后，每天<span class="el">···</span></div>
<div class="a td c" style="left:251px;width:101px;top:679.8px">人民日报</div>
<div class="a td c" style="left:342px;width:100px;top:679.8px">-</div>
<div class="a td c num" style="left:427px;width:80px;top:679.8px">317</div>
<div class="a td c" style="left:490px;width:100px;top:679.8px">2020-03-27</div>
<div class="a" style="left:605px;top:673.8px;width:18px;height:20px"><svg width="18" height="20" viewBox="0 0 18 20"><rect x="2" y="5.2" width="14" height="13" rx="1.2" fill="none" stroke="#ec6a3f" stroke-width="1.5"/><ellipse cx="9" cy="2.7" rx="1.7" ry="1.3" fill="#ec6a3f"/><path d="M9 3 V11.8" stroke="#ec6a3f" stroke-width="1.3"/><rect x="8.3" y="13.4" width="1.4" height="1.5" fill="#ec6a3f"/></svg></div>
<div class="dash" style="left:41px;top:707.4px;width:603px"></div>

<!-- right card -->
<div class="card" style="left:687px;top:88.5px;width:378px;height:680px"></div>
<svg class="a" style="left:712px;top:99.5px" width="18" height="18" viewBox="0 0 18 18">
  <rect x="0.7" y="2" width="1.4" height="13.5" rx="0.7" fill="#4596e8"/>
  <rect x="4" y="0.5" width="13.8" height="16.8" rx="1.6" fill="#4596e8"/>
  <rect x="5.8" y="2.9" width="9.7" height="3.7" fill="#fff"/>
  <rect x="5.8" y="8.6" width="9.7" height="1.5" fill="#fff"/>
  <rect x="5.8" y="11.9" width="5" height="1.5" fill="#fff"/>
</svg>
<div class="a" style="left:738px;top:101px;font-size:13px;letter-spacing:1px;color:#333;line-height:16px">竞媒传播</div>
<div class="dash" style="left:698.5px;top:128px;width:356px"></div>
<div class="a" style="left:712.9px;top:155.6px;width:15.5px;height:15.5px"><svg width="15.5" height="15.5" viewBox="0 0 16 16"><rect width="16" height="16" rx="3" fill="#8cc63e"/><ellipse cx="6.6" cy="7" rx="4.3" ry="3.6" fill="none" stroke="#fff" stroke-width="0.9"/><ellipse cx="9.8" cy="9.4" rx="3.4" ry="2.8" fill="#8cc63e" stroke="#fff" stroke-width="0.9"/><circle cx="5.2" cy="6" r="0.6" fill="#fff"/><circle cx="7.6" cy="6" r="0.6" fill="#fff"/><circle cx="8.7" cy="9" r="0.5" fill="#fff"/><circle cx="10.9" cy="9" r="0.5" fill="#fff"/></svg></div>
<div class="a rn" style="left:737px;top:156.6px">羊城晚报<span class="hy">-</span>微信</div>
<div class="a rv" style="left:738.0px;top:191.6px">18</div>
<div class="a rl" style="left:738.0px;top:208.6px">发稿数</div>
<div class="dia" style="left:797.7px;top:202.6px;background:#f5a031"></div>
<div class="a rv" style="left:817.2px;top:191.6px">18</div>
<div class="a rl" style="left:817.2px;top:208.6px">原创数</div>
<div class="dia" style="left:876.9px;top:202.6px;background:#5ec8a0"></div>
<div class="a rv" style="left:896.4px;top:191.6px">37万+</div>
<div class="a rl" style="left:896.4px;top:208.6px">阅读数</div>
<div class="dia" style="left:956.1px;top:202.6px;background:#4ab1d8"></div>
<div class="a rv" style="left:975.6px;top:191.6px">1,713</div>
<div class="a rl" style="left:975.6px;top:208.6px">点赞数</div>
<div class="a" style="left:712.9px;top:248.8px;width:15.5px;height:15.5px"><svg width="15.5" height="15.5" viewBox="0 0 16 16"><rect width="16" height="16" rx="3" fill="#f8cb6e"/><path d="M5 3 H9.6 L11.6 5 V12.8 Q11.6 13.2 11.2 13.2 H5 Q4.6 13.2 4.6 12.8 V3.4 Q4.6 3 5 3 Z" fill="#fff" fill-opacity="0.2" stroke="#fff" stroke-width="0.9" stroke-opacity="0.85"/><path d="M9.6 3 V5 H11.6" fill="none" stroke="#fff" stroke-width="0.8" stroke-opacity="0.85"/></svg></div>
<div class="a rn" style="left:737px;top:249.8px">柳州日报<span class="hy">-</span>数字报</div>
<div class="a rv" style="left:738.0px;top:284.8px">49</div>
<div class="a rl" style="left:738.0px;top:301.8px">发稿数</div>
<div class="dia" style="left:797.7px;top:295.8px;background:#f5a031"></div>
<div class="a rv" style="left:817.2px;top:284.8px">34</div>
<div class="a rl" style="left:817.2px;top:301.8px">原创数</div>
<div class="dia" style="left:876.9px;top:295.8px;background:#5ec8a0"></div>
<div class="a rv" style="left:896.4px;top:284.8px">12</div>
<div class="a rl" style="left:896.4px;top:301.8px">转载次数</div>
<div class="a" style="left:712.9px;top:341.9px;width:15.5px;height:15.5px"><svg width="15.5" height="15.5" viewBox="0 0 16 16"><rect width="16" height="16" rx="3" fill="#3a9fd6"/><rect x="4.2" y="3.4" width="7.6" height="10.2" rx="1" fill="none" stroke="#fff" stroke-width="1" stroke-opacity="0.8"/><circle cx="8" cy="7.6" r="2" fill="none" stroke="#fff" stroke-width="0.8" stroke-opacity="0.6"/><circle cx="8" cy="7.6" r="0.9" fill="#fff" fill-opacity="0.2"/><path d="M5.4 11.2 H10.6" stroke="#fff" stroke-width="0.9" stroke-opacity="0.6"/></svg></div>
<div class="a rn" style="left:737px;top:342.9px">羊城派<span class="hy">-</span>手机客户端</div>
<div class="a rv" style="left:738.0px;top:377.9px">902</div>
<div class="a rl" style="left:738.0px;top:394.9px">发稿数</div>
<div class="dia" style="left:797.7px;top:388.9px;background:#f5a031"></div>
<div class="a rv" style="left:817.2px;top:377.9px">277</div>
<div class="a rl" style="left:817.2px;top:394.9px">原创数</div>
<div class="dia" style="left:876.9px;top:388.9px;background:#5ec8a0"></div>
<div class="a rv" style="left:896.4px;top:377.9px">1,165</div>
<div class="a rl" style="left:896.4px;top:394.9px">转载次数</div>
<div class="a" style="left:712.9px;top:435.1px;width:15.5px;height:15.5px"><svg width="15.5" height="15.5" viewBox="0 0 16 16"><rect width="16" height="16" rx="3" fill="#3b7cc0"/><circle cx="8" cy="8" r="5.3" fill="none" stroke="#fff" stroke-width="1.1"/><ellipse cx="8" cy="8" rx="2.4" ry="5.3" fill="none" stroke="#fff" stroke-width="0.9"/><path d="M2.7 8 H13.3 M3.5 5.3 H12.5 M3.5 10.7 H12.5" stroke="#fff" stroke-width="0.9"/></svg></div>
<div class="a rn" style="left:737px;top:436.1px">中国军网<span class="hy">-</span>网站</div>
<div class="a rv" style="left:738.0px;top:471.1px">148</div>
<div class="a rl" style="left:738.0px;top:488.1px">发稿数</div>
<div class="dia" style="left:797.7px;top:482.1px;background:#f5a031"></div>
<div class="a rv" style="left:817.2px;top:471.1px">45</div>
<div class="a rl" style="left:817.2px;top:488.1px">原创数</div>
<div class="dia" style="left:876.9px;top:482.1px;background:#5ec8a0"></div>
<div class="a rv" style="left:896.4px;top:471.1px">422</div>
<div class="a rl" style="left:896.4px;top:488.1px">转载次数</div>
<div class="a" style="left:712.9px;top:528.2px;width:15.5px;height:15.5px"><svg width="15.5" height="15.5" viewBox="0 0 16 16"><rect width="16" height="16" rx="3" fill="#3b7cc0"/><circle cx="8" cy="8" r="5.3" fill="none" stroke="#fff" stroke-width="1.1"/><ellipse cx="8" cy="8" rx="2.4" ry="5.3" fill="none" stroke="#fff" stroke-width="0.9"/><path d="M2.7 8 H13.3 M3.5 5.3 H12.5 M3.5 10.7 H12.5" stroke="#fff" stroke-width="0.9"/></svg></div>
<div class="a rn" style="left:737px;top:529.2px">金羊网<span class="hy">-</span>网站</div>
<div class="a rv" style="left:738.0px;top:564.2px">313</div>
<div class="a rl" style="left:738.0px;top:581.2px">发稿数</div>
<div class="dia" style="left:797.7px;top:575.2px;background:#f5a031"></div>
<div class="a rv" style="left:817.2px;top:564.2px">127</div>
<div class="a rl" style="left:817.2px;top:581.2px">原创数</div>
<div class="dia" style="left:876.9px;top:575.2px;background:#5ec8a0"></div>
<div class="a rv" style="left:896.4px;top:564.2px">3,314</div>
<div class="a rl" style="left:896.4px;top:581.2px">转载次数</div>
<div class="a" style="left:712.9px;top:621.4px;width:15.5px;height:15.5px"><svg width="15.5" height="15.5" viewBox="0 0 16 16"><rect width="16" height="16" rx="3" fill="#6887e2"/><ellipse cx="4.3" cy="10.9" rx="1.4" ry="1.1" fill="none" stroke="#fff" stroke-width="0.9" stroke-opacity="0.9"/><path d="M3.6 7.3 A4 4 0 0 1 7.6 11.3 M3.6 5 A6.3 6.3 0 0 1 9.9 11.3 M3.6 2.6 A8.7 8.7 0 0 1 12.3 11.3" fill="none" stroke="#fff" stroke-width="1.1" stroke-opacity="0.9"/></svg></div>
<div class="a rn" style="left:737px;top:622.4px">广州日报<span class="hy">-</span>新浪微博</div>
<div class="a rv" style="left:738.0px;top:657.4px">29</div>
<div class="a rl" style="left:738.0px;top:674.4px">发稿数</div>
<div class="dia" style="left:781.5px;top:668.4px;background:#f5a031"></div>
<div class="a rv" style="left:801.0px;top:657.4px">28</div>
<div class="a rl" style="left:801.0px;top:674.4px">原创数</div>
<div class="dia" style="left:844.5px;top:668.4px;background:#5ec8a0"></div>
<div class="a rv" style="left:864.0px;top:657.4px">1,411</div>
<div class="a rl" style="left:864.0px;top:674.4px">转发数</div>
<div class="dia" style="left:907.5px;top:668.4px;background:#4ab1d8"></div>
<div class="a rv" style="left:927.0px;top:657.4px">46</div>
<div class="a rl" style="left:927.0px;top:674.4px">评论数</div>
<div class="dia" style="left:970.5px;top:668.4px;background:#8e7ff2"></div>
<div class="a rv" style="left:990.0px;top:657.4px">0</div>
<div class="a rl" style="left:990.0px;top:674.4px">阅读数</div>
</body></html>
